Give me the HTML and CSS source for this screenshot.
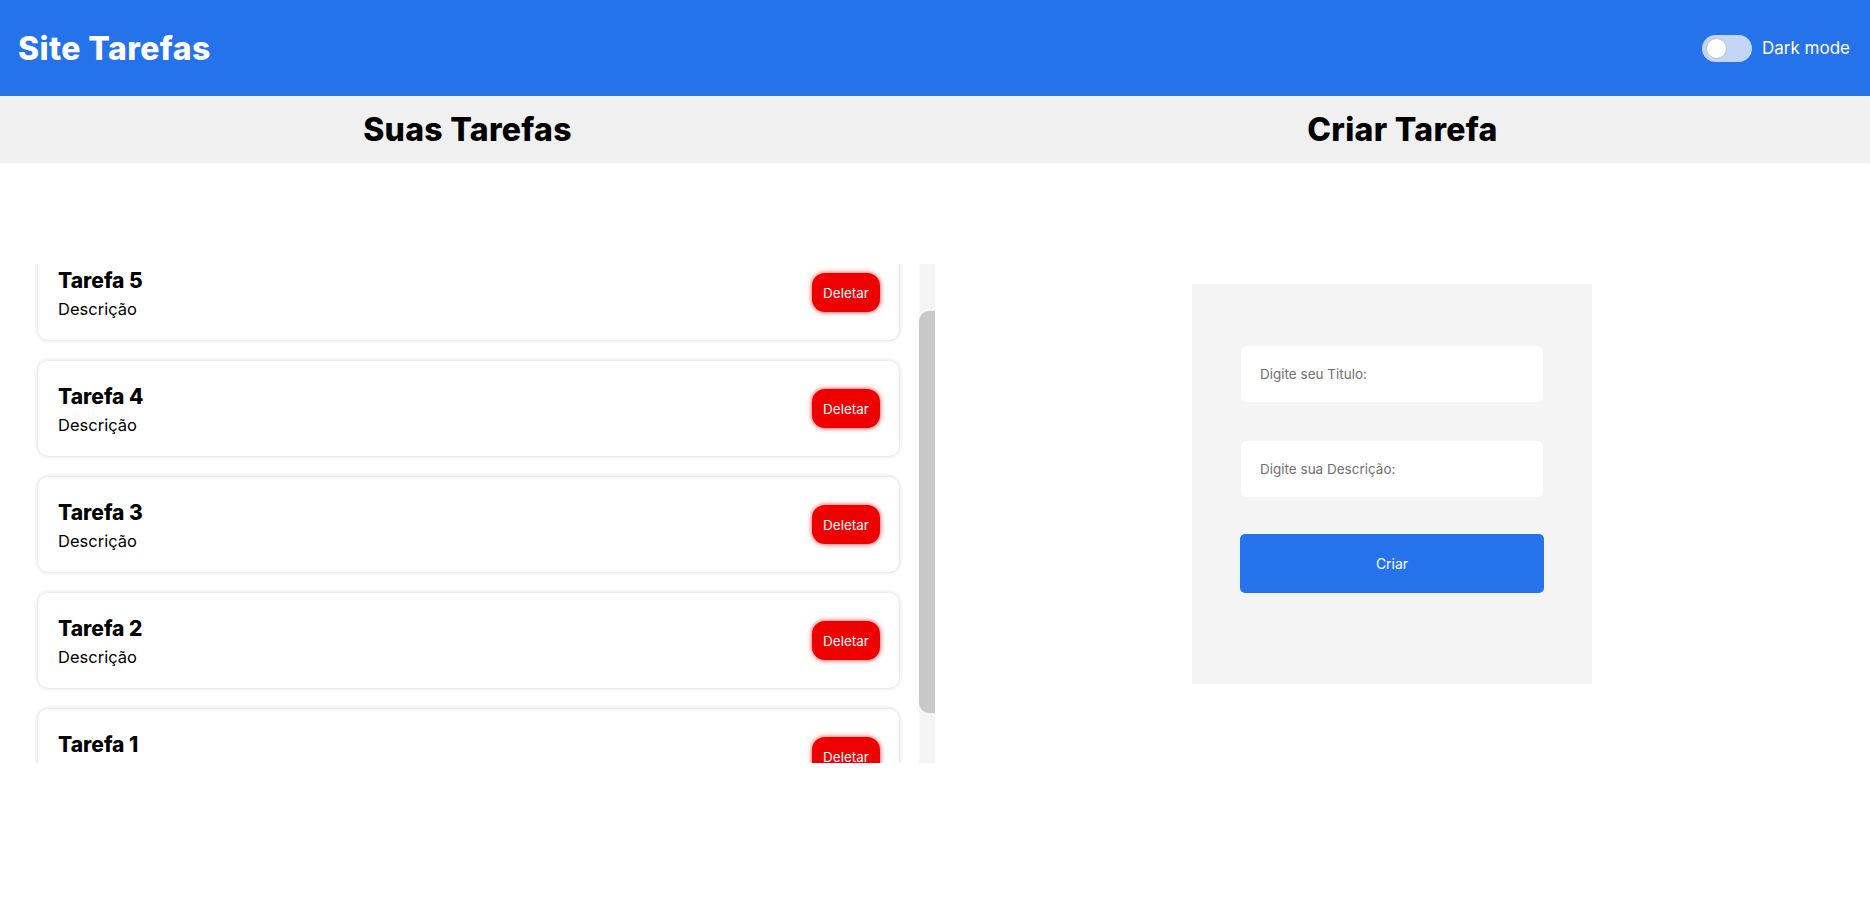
FILE: index.html
```html
<!DOCTYPE html>
<html lang="pt-BR">
<head>
<meta charset="utf-8">
<title>Site Tarefas</title>
<link rel="stylesheet" href="styles.css">
</head>
<body>
<header class="topbar">
  <h1 class="brand">Site Tarefas</h1>
  <label class="mode">
    <span class="switch"><span class="knob"></span></span>
    <span class="mode-label">Dark mode</span>
  </label>
</header>
<div class="band">
  <h2 class="band-title">Suas Tarefas</h2>
  <h2 class="band-title">Criar Tarefa</h2>
</div>
<main class="main">
  <section class="col">
    <div class="list-wrap">
      <div class="list" id="list">
        <div class="card">
          <div class="card-text"><div class="card-title">Tarefa 5</div><div class="card-desc">Descrição</div></div>
          <button class="del">Deletar</button>
        </div>
        <div class="card">
          <div class="card-text"><div class="card-title">Tarefa 4</div><div class="card-desc">Descrição</div></div>
          <button class="del">Deletar</button>
        </div>
        <div class="card">
          <div class="card-text"><div class="card-title">Tarefa 3</div><div class="card-desc">Descrição</div></div>
          <button class="del">Deletar</button>
        </div>
        <div class="card">
          <div class="card-text"><div class="card-title">Tarefa 2</div><div class="card-desc">Descrição</div></div>
          <button class="del">Deletar</button>
        </div>
        <div class="card">
          <div class="card-text"><div class="card-title">Tarefa 1</div><div class="card-desc">Descrição</div></div>
          <button class="del">Deletar</button>
        </div>
      </div>
      <div class="scrollbar"><div class="thumb"></div></div>
    </div>
  </section>
  <section class="col">
    <form class="panel">
      <input class="field" type="text" placeholder="Digite seu Titulo:">
      <input class="field field-2" type="text" placeholder="Digite sua Descrição:">
      <button class="create" type="button">Criar</button>
    </form>
  </section>
</main>
<script src="script.js"></script>
</body>
</html>
```
FILE: styles.css
```css
* { box-sizing: border-box; }
html, body { margin: 0; padding: 0; }
body {
  font-family: Inter, "Noto Sans", sans-serif;
  background: #ffffff;
  color: #000;
}
.topbar {
  height: 96px;
  background: #2473ea;
  display: flex;
  align-items: center;
  justify-content: space-between;
  padding: 0 20px 0 18px;
}
.brand {
  margin: 0;
  color: #fff;
  font-size: 32px;
  font-weight: 800;
  letter-spacing: 0.4px;
}
.mode {
  display: flex;
  align-items: center;
  gap: 10px;
  color: #fff;
}
.switch {
  width: 50px;
  height: 27px;
  border-radius: 14px;
  background: #c3d6f6;
  display: flex;
  align-items: center;
  padding-left: 4px;
}
.knob {
  width: 21px;
  height: 21px;
  border-radius: 50%;
  background: #fff;
  border: 1px solid #b9c4d6;
}
.mode-label { font-size: 17px; }
.band {
  height: 67px;
  background: #f0f0f0;
  display: grid;
  grid-template-columns: 935px 935px;
  align-items: center;
}
.band-title {
  margin: 0;
  text-align: center;
  font-size: 32px;
  font-weight: 800;
  letter-spacing: 0.3px;
}
.main {
  display: grid;
  grid-template-columns: 935px 935px;
}
.list-wrap {
  margin: 101px 0 0 18px;
  height: 499px;
  display: flex;
}
.list {
  flex: 1;
  height: 499px;
  overflow: hidden;
  padding: 39px 20px 21px 20px;
  display: flex;
  flex-direction: column;
  gap: 21px;
}
.scrollbar {
  width: 16px;
  height: 499px;
  background: #f5f5f5;
  padding-top: 47px;
}
.thumb {
  height: 402px;
  background: #c8c8c8;
  border-radius: 10px 0 0 10px;
}
.card {
  flex: 0 0 95px;
  background: #fff;
  border-radius: 10px;
  box-shadow: 0 0 5px rgba(0,0,0,0.18);
  display: flex;
  align-items: center;
  justify-content: space-between;
  padding: 0 19px 0 20px;
}
.card-text { padding-top: 6px; }
.card-title { font-size: 21px; font-weight: 800; line-height: 26px; }
.card-desc { font-size: 16.5px; line-height: 27px; margin-top: 2px; }
.del {
  width: 68px;
  height: 39px;
  border: none;
  border-radius: 13px;
  background: #ee0000;
  color: #fff;
  font-family: inherit;
  font-size: 13.5px;
  box-shadow: 0 0 5px #ff3030;
}
.panel {
  margin: 121px 0 0 257px;
  width: 400px;
  height: 400px;
  background: #f4f4f4;
  display: flex;
  flex-direction: column;
  padding: 62px 48px 0 48px;
}
.field {
  width: 302px;
  height: 56px;
  margin-left: 1px;
  border: none;
  border-radius: 5px;
  background: #fff;
  padding: 0 19px;
  font-family: inherit;
  font-size: 13.5px;
}
.field::placeholder { color: #707070; }
.field-2 { margin-top: 39px; }
.create {
  margin-top: 37px;
  width: 304px;
  height: 59px;
  border: none;
  border-radius: 5px;
  background: #2473ea;
  color: #fff;
  font-family: inherit;
  font-size: 14px;
}
```
FILE: script.js
```js
document.getElementById('list').scrollTop = 58;
```
